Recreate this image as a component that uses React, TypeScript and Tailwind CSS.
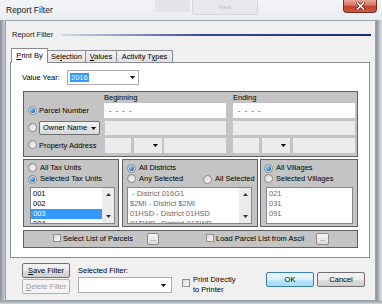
import React from "react";

const Radio = ({ checked = false }: { checked?: boolean }) => (
  <span className="inline-flex h-[9px] w-[9px] shrink-0 items-center justify-center rounded-full border border-[#8a8a8a] bg-[linear-gradient(135deg,#d4d4d4,#fbfbfb)]">
    {checked && (
      <span className="h-[5px] w-[5px] rounded-full bg-[radial-gradient(circle_at_35%_35%,#9fd6ff,#2a7bd0_55%,#0d3f86)]" />
    )}
  </span>
);

const Check = () => (
  <span className="inline-block h-[8px] w-[8px] shrink-0 border border-[#8e8f8f] bg-[linear-gradient(135deg,#d8d8d8,#fdfdfd)]" />
);

const Down = ({ c = "#000" }: { c?: string }) => (
  <svg width="5" height="3" viewBox="0 0 5 3" className="shrink-0">
    <path d="M0 0H5L2.5 3Z" fill={c} />
  </svg>
);
const Up = ({ c = "#333" }: { c?: string }) => (
  <svg width="5" height="3" viewBox="0 0 5 3" className="shrink-0">
    <path d="M0 3H5L2.5 0Z" fill={c} />
  </svg>
);

const ScrollBar = () => (
  <div className="flex w-[12px] shrink-0 flex-col items-center justify-between bg-[#ececec] py-[5px]">
    <Up />
    <Down c="#333" />
  </div>
);

const Field = ({ w, white = false, children, arrow = false }: { w: string; white?: boolean; children?: React.ReactNode; arrow?: boolean }) => (
  <div className={`${w} flex h-full shrink-0 items-center ${white ? "bg-white" : "bg-[#ececec]"}`}>
    <span className="pl-[5px] text-[#333]">{children}</span>
    {arrow && (
      <span className="ml-auto mr-[4px]">
        <Down />
      </span>
    )}
  </div>
);

const btn =
  "flex h-[15px] w-[48px] items-center justify-center rounded-[2px] border border-[#707070] bg-[linear-gradient(#f2f2f2,#ebebeb_50%,#dddddd_51%,#cfcfcf)]";

export default function App() {
  return (
    <div className="flex h-[304px] w-[382px] flex-col overflow-hidden bg-[#d9dee4] font-['Liberation_Sans',Arial,sans-serif] text-[7.5px] leading-none text-black">
      {/* title bar */}
      <div className="flex h-[20px] shrink-0 items-start bg-[linear-gradient(#f3f5f8,#e8ecf1)]">
        <span className="ml-[6px] mt-[6px] w-[149px] text-[8.5px] text-[#1a1a1a]">Report Filter</span>
        <div className="h-[12px] w-[35px] rounded-b-[3px] bg-[#e2e4e7]" />
        <div className="ml-[2px] flex h-[15px] w-[66px] items-center justify-center rounded-b-[3px] border-x border-b border-[#d3d6da] bg-[#e6e8eb]">
          <span className="text-[6px] text-[#b8bcc0]">Next</span>
        </div>
        <div className="ml-auto mr-[5px] flex h-[13px] w-[34px] items-center justify-center rounded-b-[4px] border-x border-b border-[#7a2c22] bg-[linear-gradient(#e9a596,#d2705e_45%,#c2412c_55%,#cf5a44)]">
          <svg width="9" height="8" viewBox="0 0 9 8">
            <path d="M1.5 1L7.5 7M7.5 1L1.5 7" stroke="#5a1e16" strokeWidth="3" strokeLinecap="square" />
            <path d="M1.5 1L7.5 7M7.5 1L1.5 7" stroke="#ffffff" strokeWidth="1.6" strokeLinecap="square" />
          </svg>
        </div>
      </div>

      <div className="flex h-[281px] shrink-0">
        <div className="w-[5px] shrink-0 bg-[linear-gradient(to_right,#8d9096,#c9ced5)]" />
        {/* dialog body */}
        <div className="flex w-[371px] shrink-0 flex-col border border-[#9aa3ad] bg-[#f0f0f0]">
          {/* group label */}
          <div className="mt-[9px] flex h-[10px] items-center">
            <span className="ml-[6px] w-[46px] text-[#1a1a1a]">Report Filter</span>
            <div className="ml-[4px] mr-[4px] h-[2px] flex-1 bg-[linear-gradient(to_right,#d4d9e4,#3a4a98_45%,#1b2a7a)]" />
          </div>

          {/* tabs */}
          <div className="ml-[5px] mt-[8px] flex h-[14px] items-end">
            <div className="relative top-[1px] z-10 flex h-[15px] w-[37px] items-center justify-center border-x border-t border-[#898c95] bg-white">
              <span>
                <span className="underline">P</span>rint By
              </span>
            </div>
            <div className="flex h-[12px] w-[38px] items-center justify-center border-r border-t border-[#898c95] bg-[linear-gradient(#f2f2f2,#e1e1e1)]">
              <span>
                Se<span className="underline">l</span>ection
              </span>
            </div>
            <div className="flex h-[12px] w-[31px] items-center justify-center border-r border-t border-[#898c95] bg-[linear-gradient(#f2f2f2,#e1e1e1)]">
              <span>
                <span className="underline">V</span>alues
              </span>
            </div>
            <div className="flex h-[12px] w-[56px] items-center justify-center border-r border-t border-[#898c95] bg-[linear-gradient(#f2f2f2,#e1e1e1)]">
              <span>
                Activity T<span className="underline">y</span>pes
              </span>
            </div>
          </div>

          {/* panel */}
          <div className="ml-[4px] flex h-[196px] w-[360px] shrink-0 flex-col border border-[#898c95] bg-white">
            {/* value year */}
            <div className="ml-[11px] mt-[7px] flex h-[15px] items-center">
              <span className="w-[45px]">Value Year:</span>
              <div className="flex h-[15px] w-[72px] items-center border border-[#abadb3] bg-white">
                <span className="ml-[2px] bg-[#3399ff] px-[1px] py-[1px] text-white">2016</span>
                <span className="ml-auto mr-[3px]">
                  <Down />
                </span>
              </div>
            </div>

            {/* parcel group */}
            <div className="ml-[12px] mt-[6px] flex h-[66px] w-[335px] shrink-0 flex-col border border-[#5f5f5f] bg-[#c4c4c4]">
              <div className="flex h-[11px] items-center">
                <span className="ml-[80px] w-[129px]">Beginning</span>
                <span>Ending</span>
              </div>
              <div className="flex h-[15px]">
                <div className="flex w-[80px] items-center">
                  <span className="ml-[4px]">
                    <Radio checked />
                  </span>
                  <span className="ml-[2px]">Parcel Number</span>
                </div>
                <Field w="w-[122px]" white>
                  -&nbsp;&nbsp;-&nbsp;&nbsp;-&nbsp;&nbsp;-
                </Field>
                <div className="w-[7px]" />
                <Field w="w-[122px]" white>
                  -&nbsp;&nbsp;-&nbsp;&nbsp;-&nbsp;&nbsp;-
                </Field>
              </div>
              <div className="mt-[3px] flex h-[14px]">
                <div className="flex w-[81px] items-center">
                  <span className="ml-[4px]">
                    <Radio />
                  </span>
                  <div className="ml-[2px] flex h-[14px] w-[61px] items-center rounded-[2px] border border-[#707070] bg-[linear-gradient(#f4f4f4,#e6e6e6_50%,#d8d8d8)]">
                    <span className="ml-[3px]">Owner Name</span>
                    <span className="ml-auto mr-[3px]">
                      <Down />
                    </span>
                  </div>
                </div>
                <Field w="w-[121px]" />
                <div className="w-[7px]" />
                <Field w="w-[122px]" />
              </div>
              <div className="mt-[3px] flex h-[15px]">
                <div className="flex w-[81px] items-center">
                  <span className="ml-[4px]">
                    <Radio />
                  </span>
                  <span className="ml-[2px]">Property Address</span>
                </div>
                <Field w="w-[26px]" />
                <div className="w-[3px]" />
                <Field w="w-[28px]" arrow />
                <div className="w-[2px]" />
                <Field w="w-[62px]" />
                <div className="w-[7px]" />
                <Field w="w-[26px]" />
                <div className="w-[3px]" />
                <Field w="w-[28px]" arrow />
                <div className="w-[3px]" />
                <Field w="w-[62px]" />
              </div>
            </div>

            {/* boxes row */}
            <div className="ml-[12px] mt-[2px] flex h-[68px] w-[335px] shrink-0">
              {/* tax units */}
              <div className="flex w-[96px] shrink-0 flex-col border border-[#5f5f5f] bg-[#c4c4c4]">
                <div className="mt-[3px] flex h-[10px] items-center">
                  <span className="ml-[4px]">
                    <Radio />
                  </span>
                  <span className="ml-[3px]">All Tax Units</span>
                </div>
                <div className="mt-[1px] flex h-[10px] items-center">
                  <span className="ml-[4px]">
                    <Radio checked />
                  </span>
                  <span className="ml-[3px]">Selected Tax Units</span>
                </div>
                <div className="ml-[6px] mt-[3px] flex h-[37px] w-[85px] overflow-hidden border border-[#828790] bg-white">
                  <div className="flex flex-1 flex-col overflow-hidden pt-[1px]">
                    <div className="flex h-[10px] shrink-0 items-center pl-[2px]">001</div>
                    <div className="flex h-[10px] shrink-0 items-center pl-[2px]">002</div>
                    <div className="flex h-[10px] shrink-0 items-center bg-[#3399ff] pl-[2px] text-white">003</div>
                    <div className="flex h-[10px] shrink-0 items-center pl-[2px]">004</div>
                  </div>
                  <ScrollBar />
                </div>
              </div>

              {/* districts */}
              <div className="ml-[3px] flex w-[136px] shrink-0 flex-col border border-[#5f5f5f] bg-[#c4c4c4]">
                <div className="mt-[3px] flex h-[10px] items-center">
                  <span className="ml-[4px]">
                    <Radio checked />
                  </span>
                  <span className="ml-[3px]">All Districts</span>
                </div>
                <div className="mt-[1px] flex h-[10px] items-center">
                  <span className="ml-[4px]">
                    <Radio />
                  </span>
                  <span className="ml-[3px] w-[64px]">Any Selected</span>
                  <Radio />
                  <span className="ml-[3px]">All Selected</span>
                </div>
                <div className="ml-[4px] mt-[3px] flex h-[37px] w-[125px] overflow-hidden border border-[#828790] bg-white text-[#6a6a6a]">
                  <div className="flex flex-1 flex-col overflow-hidden whitespace-nowrap pt-[1px]">
                    <div className="flex h-[10px] shrink-0 items-center pl-[2px]">&nbsp;- District 016G1</div>
                    <div className="flex h-[10px] shrink-0 items-center pl-[2px]">$2MI - District $2MI</div>
                    <div className="flex h-[10px] shrink-0 items-center pl-[2px]">01HSD - District 01HSD</div>
                    <div className="flex h-[10px] shrink-0 items-center pl-[2px]">01TWP - District 01TWP</div>
                  </div>
                  <ScrollBar />
                </div>
              </div>

              {/* villages */}
              <div className="ml-[2px] flex w-[98px] shrink-0 flex-col border border-[#5f5f5f] bg-[#c4c4c4]">
                <div className="mt-[3px] flex h-[10px] items-center">
                  <span className="ml-[3px]">
                    <Radio checked />
                  </span>
                  <span className="ml-[3px]">All Villages</span>
                </div>
                <div className="mt-[1px] flex h-[10px] items-center">
                  <span className="ml-[3px]">
                    <Radio />
                  </span>
                  <span className="ml-[3px]">Selected Villages</span>
                </div>
                <div className="ml-[5px] mt-[3px] flex h-[37px] w-[87px] flex-col overflow-hidden border border-[#828790] bg-white pt-[1px] text-[#6a6a6a]">
                  <div className="flex h-[10px] shrink-0 items-center pl-[2px]">021</div>
                  <div className="flex h-[10px] shrink-0 items-center pl-[2px]">031</div>
                  <div className="flex h-[10px] shrink-0 items-center pl-[2px]">091</div>
                </div>
              </div>
            </div>

            {/* parcel list bar */}
            <div className="ml-[12px] mt-[3px] flex h-[18px] w-[335px] shrink-0 items-center border border-[#5f5f5f] bg-[#c4c4c4]">
              <span className="ml-[29px]">
                <Check />
              </span>
              <span className="ml-[2px] w-[84px]">Select List of Parcels</span>
              <div className="flex h-[12px] w-[12px] items-end justify-center rounded-[2px] border border-[#8a8a8a] bg-[linear-gradient(#f4f4f4,#dcdcdc)] pb-[2px] text-[6px]">
                ...
              </div>
              <span className="ml-[47px]">
                <Check />
              </span>
              <span className="ml-[2px] w-[100px]">Load Parcel List from Ascii</span>
              <div className="flex h-[12px] w-[13px] items-end justify-center rounded-[2px] border border-[#8a8a8a] bg-[linear-gradient(#f4f4f4,#dcdcdc)] pb-[2px] text-[6px]">
                ...
              </div>
            </div>
          </div>

          {/* bottom controls */}
          <div className="flex flex-1 items-start pl-[16px] pr-[10px]">
            <div className="mt-[5px] flex flex-col">
              <div className={btn}>
                <span>
                  <span className="underline">S</span>ave Filter
                </span>
              </div>
              <div className="mt-[1px] flex h-[15px] w-[48px] items-center justify-center rounded-[2px] border border-[#adb2b5] bg-[#f4f4f4] text-[#a0a0a0]">
                <span>
                  <span className="underline">D</span>elete Filter
                </span>
              </div>
            </div>
            <div className="ml-[8px] mt-[8px] flex flex-col">
              <span className="flex h-[10px] items-center">Selected Filter:</span>
              <div className="mt-[1px] flex h-[16px] w-[94px] items-center border border-[#abadb3] bg-white">
                <span className="ml-auto mr-[5px]">
                  <Down />
                </span>
              </div>
            </div>
            <div className="ml-[10px] mt-[21px]">
              <Check />
            </div>
            <div className="ml-[3px] mt-[17px] flex flex-col leading-[10px]">
              <span>Print Directly</span>
              <span>to Printer</span>
            </div>
            <div className="ml-auto mt-[14px] flex">
              <div className="flex h-[15px] w-[48px] items-center justify-center rounded-[2px] border border-[#3c7fb1] bg-[linear-gradient(#eaf6fd,#d9f0fc_50%,#bee6fd_51%,#a7d9f5)]">
                OK
              </div>
              <div className={`${btn} ml-[3px]`}>Cancel</div>
            </div>
          </div>
        </div>
        <div className="w-[6px] shrink-0 bg-[linear-gradient(to_right,#8b9097,#dfe3e8)]" />
      </div>
      <div className="flex-1 bg-[linear-gradient(#9aa0a7,#d2d7dd)]" />
    </div>
  );
}
